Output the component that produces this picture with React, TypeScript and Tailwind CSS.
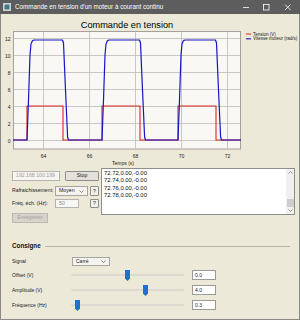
import React from "react";

const FONT = { fontFamily: '"Liberation Sans", Arial, sans-serif' };

function TitleBar() {
  return (
    <div className="h-[14px] bg-[#5d5d5d] flex items-center relative shrink-0">
      <svg width="8" height="8" viewBox="0 0 8 8" className="ml-[3px]">
        <rect x="0.5" y="0.5" width="7" height="7" fill="#e8e8e8" stroke="#cfcfcf" />
        <rect x="1.5" y="2" width="5" height="4.5" fill="#3a7a8a" />
        <rect x="1.5" y="1" width="5" height="1" fill="#9ab" />
      </svg>
      <span className="ml-[4px] text-[6.3px] text-white leading-none">
        Commande en tension d'un moteur à courant continu
      </span>
      <svg width="60" height="14" viewBox="0 0 60 14" className="absolute right-0 top-0">
        <line x1="3" y1="7.5" x2="9" y2="7.5" stroke="#ffffff" strokeWidth="0.8" />
        <rect x="23.5" y="4.5" width="5.5" height="5.5" fill="none" stroke="#ffffff" strokeWidth="0.8" />
        <line x1="45" y1="4.5" x2="50.5" y2="10" stroke="#ffffff" strokeWidth="0.8" />
        <line x1="50.5" y1="4.5" x2="45" y2="10" stroke="#ffffff" strokeWidth="0.8" />
      </svg>
    </div>
  );
}

function Chart() {
  const rises = [27, 102, 178];
  const falls = [63, 140, 216];
  let red = "M13,140";
  let blue = "M13,140";
  rises.forEach((r, i) => {
    const f = falls[i];
    red += ` L${r},140 L${r},106 L${f},106 L${f},140`;
    blue += ` L${r},140 L${r + 1.5},100 L${r + 3},55 L${r + 4},44 L${r + 5.5},40.6 L${r + 7},40 L${f - 0.5},40 L${f + 0.5},43 L${f + 2.5},90 L${f + 4.6},137 L${f + 5.5},140`;
  });
  red += " L241,140";
  blue += " L241,140";
  const ys = [
    { v: "12", y: 38 },
    { v: "10", y: 55 },
    { v: "8", y: 72 },
    { v: "6", y: 89 },
    { v: "4", y: 106 },
    { v: "2", y: 123 },
    { v: "0", y: 140 },
  ];
  const xs = [
    { v: "64", x: 43 },
    { v: "66", x: 89 },
    { v: "68", x: 135 },
    { v: "70", x: 181 },
    { v: "72", x: 227 },
  ];
  return (
    <svg width="298" height="152" viewBox="1 14 298 152" className="block shrink-0">
      <text x="127" y="25" textAnchor="middle" dominantBaseline="central" fontSize="9.2" fill="#000" style={FONT}>
        Commande en tension
      </text>
      <rect x="13.5" y="31.5" width="227" height="117.5" fill="#f9f8f4" stroke="#a2a29c" strokeWidth="1" />
      {ys.map((t) => (
        <line key={t.v} x1="14" x2="240" y1={t.y + 0.5} y2={t.y + 0.5} stroke="#bdbdb5" strokeWidth="0.8" />
      ))}
      {xs.map((t) => (
        <line key={t.v} y1="32" y2="148.5" x1={t.x + 0.5} x2={t.x + 0.5} stroke="#bdbdb5" strokeWidth="0.8" />
      ))}
      <path d={red} fill="none" stroke="#e02424" strokeWidth="1.1" strokeLinejoin="round" />
      <path d={blue} fill="none" stroke="#1616c8" strokeWidth="1.2" strokeLinejoin="round" />
      {ys.map((t) => (
        <text key={t.v} x="10.5" y={t.y + 0.5} textAnchor="end" dominantBaseline="central" fontSize="5" fill="#222" style={FONT}>
          {t.v}
        </text>
      ))}
      {xs.map((t) => (
        <text key={t.v} x={t.x + 0.5} y="155.5" textAnchor="middle" dominantBaseline="central" fontSize="5" fill="#222" style={FONT}>
          {t.v}
        </text>
      ))}
      <text x="123" y="163" textAnchor="middle" dominantBaseline="central" fontSize="5" fill="#222" style={FONT}>
        Temps (s)
      </text>
      <line x1="246" x2="251" y1="34" y2="34" stroke="#e04848" strokeWidth="1.2" />
      <line x1="246" x2="251" y1="38.8" y2="38.8" stroke="#2424c8" strokeWidth="1.2" />
      <text x="253" y="34" dominantBaseline="central" fontSize="4.5" fill="#222" style={FONT}>
        Tension (V)
      </text>
      <text x="253" y="38.8" dominantBaseline="central" fontSize="4.5" fill="#222" style={FONT}>
        Vitesse moteur (rad/s)
      </text>
    </svg>
  );
}

function QButton() {
  return (
    <div className="w-[9px] h-full border border-[#8e8e8a] bg-[#f1f0ea] rounded-[1px] flex items-center justify-center text-[5px] text-[#222] leading-none">
      ?
    </div>
  );
}

function Chevron() {
  return (
    <svg width="5" height="3" viewBox="0 0 5 3">
      <polyline points="0.5,0.5 2.5,2.5 4.5,0.5" fill="none" stroke="#444" strokeWidth="0.6" />
    </svg>
  );
}

function Slider({ pos }: { pos: number }) {
  return (
    <div className="relative w-[113px] h-[11px] flex items-center">
      <div className="w-full h-[2px] bg-[#dcdad0] rounded-full" />
      <svg
        width="5"
        height="11"
        viewBox="0 0 5 11"
        className="absolute top-0"
        style={{ left: `${pos - 2.5}px` }}
      >
        <polygon points="0,0 5,0 5,8.5 2.5,11 0,8.5" fill="#1f70cf" />
      </svg>
    </div>
  );
}

function ValueBox({ v }: { v: string }) {
  return (
    <div className="ml-[8px] w-[24px] h-[10px] bg-white border border-[#9a9a96] flex items-center pl-[2px] text-[5px] text-[#222] leading-none">
      {v}
    </div>
  );
}

export default function App() {
  const lines = ["72.72,0.00,-0.00", "72.74,0.00,-0.00", "72.76,0.00,-0.00", "72.78,0.00,-0.00"];
  return (
    <div className="w-[300px] h-[320px] flex flex-col bg-[#ece9d8] overflow-hidden" style={FONT}>
      <TitleBar />
      <div className="flex-1 flex flex-col border-x border-b border-[#8a8a86]">
        <Chart />
        {/* controls */}
        <div className="flex pt-[2px] pl-[11px] h-[63px] shrink-0">
          <div className="w-[87px] flex flex-col pt-[3px] text-[5.2px] text-[#222] leading-none">
            <div className="flex h-[10px]">
              <div className="w-[48px] h-full bg-[#f7f6f2] border border-[#b4b3ad] flex items-center pl-[3px] text-[#9a9a96]">
                192.168.100.199
              </div>
              <div className="ml-[5px] w-[34px] h-full border border-[#8e8e8a] bg-[#e3e1da] rounded-[1px] flex items-center justify-center">
                Stop
              </div>
            </div>
            <div className="flex h-[10px] mt-[5px] items-center">
              <div className="w-[43px]">Rafraichissement:</div>
              <div className="w-[33px] h-full bg-[#f4f3ee] border border-[#a6a5a0] flex items-center justify-between px-[3px]">
                <span>Moyen</span>
                <Chevron />
              </div>
              <div className="ml-[2px] h-full">
                <QButton />
              </div>
            </div>
            <div className="flex h-[9px] mt-[3px] items-center">
              <div className="w-[43px]">Fréq. éch. (Hz):</div>
              <div className="w-[24px] h-full bg-[#f7f6f2] border border-[#b4b3ad] flex items-center pl-[3px] text-[#8a8a86]">
                50
              </div>
              <div className="ml-[11px] h-full">
                <QButton />
              </div>
            </div>
            <div className="flex h-[10px] mt-[5px]">
              <div className="w-[36px] h-full bg-[#d6d4cb] border border-[#bcbab2] flex items-center justify-center text-[#a2a19b]">
                Enregistrer
              </div>
            </div>
          </div>
          <div className="ml-[2px] w-[194px] h-[47px] bg-white border border-[#8e8e8a] flex">
            <div className="flex-1 pl-[2px] pt-[1px] text-[5.9px] leading-[7.4px] text-[#111]">
              {lines.map((l) => (
                <div key={l}>{l}</div>
              ))}
            </div>
            <div className="w-[8px] h-full bg-[#f0f0f0] flex flex-col items-center justify-between py-[2px]">
              <svg width="5" height="3" viewBox="0 0 5 3">
                <polyline points="0.5,2.5 2.5,0.5 4.5,2.5" fill="none" stroke="#555" strokeWidth="0.6" />
              </svg>
              <div className="flex flex-col items-center w-full">
                <div className="w-[7px] h-[8px] bg-[#cdcdcd]" />
                <svg width="5" height="3" viewBox="0 0 5 3" className="mt-[2px]">
                  <polyline points="0.5,0.5 2.5,2.5 4.5,0.5" fill="none" stroke="#555" strokeWidth="0.6" />
                </svg>
              </div>
            </div>
          </div>
        </div>
        {/* consigne */}
        <div className="flex flex-col pt-[12px] pl-[11px] pr-[9px] text-[5px] text-[#222] leading-none">
          <div className="flex items-center h-[10px]">
            <span className="font-bold text-[6.3px] text-[#111]">Consigne</span>
            <div className="flex-1 ml-[4px] h-px bg-[#b7b5aa]" />
          </div>
          <div className="flex items-center h-[9px] mt-[6px]">
            <div className="w-[60px]">Signal</div>
            <div className="w-[38px] h-full bg-[#f4f3ee] border border-[#a6a5a0] flex items-center justify-between px-[3px]">
              <span>Carré</span>
              <Chevron />
            </div>
          </div>
          <div className="flex items-center h-[10px] mt-[4px]">
            <div className="w-[59px]">Offset (V)</div>
            <Slider pos={56.5} />
            <ValueBox v="0.0" />
          </div>
          <div className="flex items-center h-[10px] mt-[5px]">
            <div className="w-[59px]">Amplitude (V)</div>
            <Slider pos={74.5} />
            <ValueBox v="4.0" />
          </div>
          <div className="flex items-center h-[10px] mt-[5px]">
            <div className="w-[59px]">Fréquence (Hz)</div>
            <Slider pos={6.5} />
            <ValueBox v="0.3" />
          </div>
        </div>
      </div>
    </div>
  );
}
